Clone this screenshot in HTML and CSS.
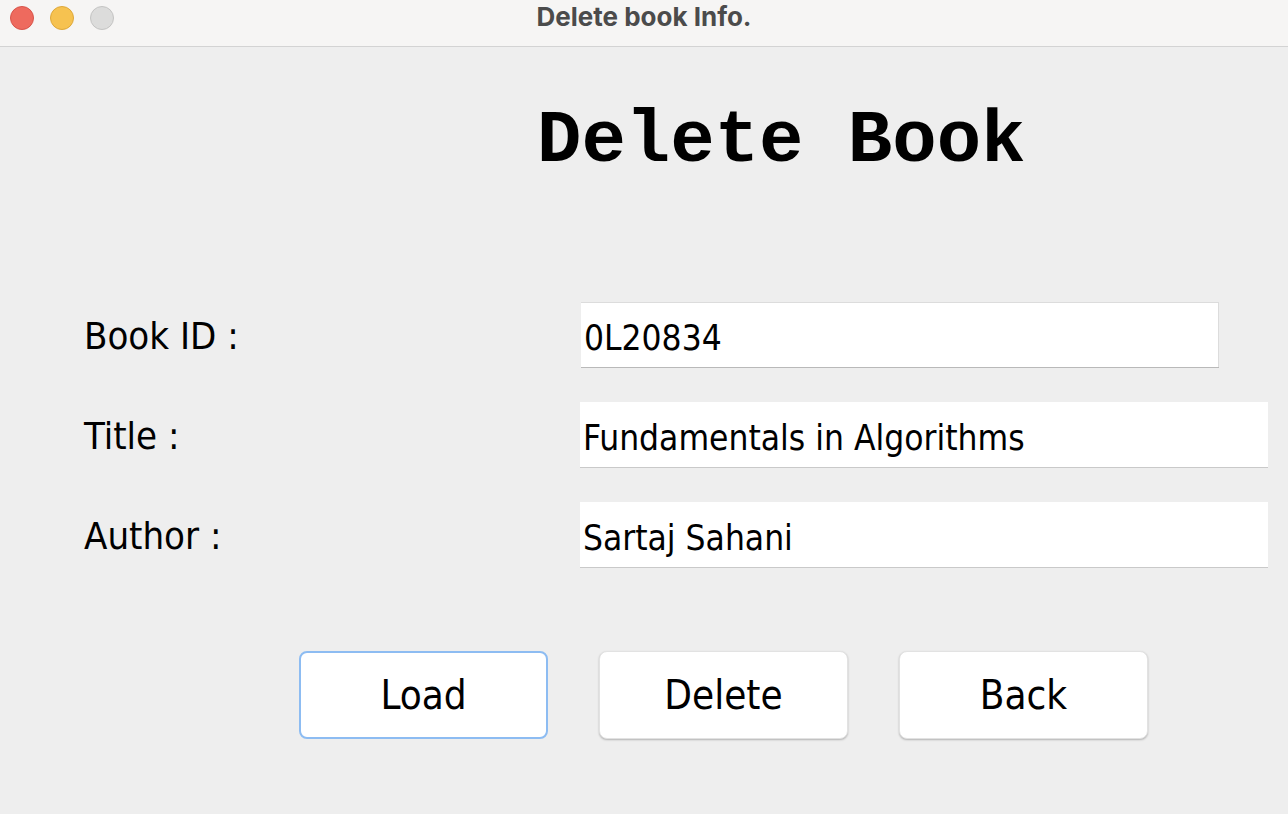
FILE: index.html
```html
<!DOCTYPE html>
<html>
<head>
<meta charset="utf-8">
<link rel="stylesheet" href="styles.css">
</head>
<body>
<div class="window">
  <header class="titlebar">
    <div class="lights">
      <span class="light red"></span>
      <span class="light yellow"></span>
      <span class="light gray"></span>
    </div>
    <div class="wintitle">Delete book Info.</div>
  </header>
  <main class="content">
    <h1 class="heading">Delete Book</h1>
    <div class="form">
      <label class="label">Book ID :</label>
      <div class="field field-id">0L20834</div>
      <label class="label">Title :</label>
      <div class="field field-wide">Fundamentals in Algorithms</div>
      <label class="label">Author :</label>
      <div class="field field-wide">Sartaj Sahani</div>
    </div>
    <div class="buttons">
      <button class="btn btn-focus">Load</button>
      <button class="btn">Delete</button>
      <button class="btn">Back</button>
    </div>
  </main>
</div>
</body>
</html>
```

FILE: styles.css
```css
html, body {
  margin: 0;
  padding: 0;
}
body {
  width: 1288px;
  height: 814px;
  overflow: hidden;
  background: #eeeeee;
  font-family: "DejaVu Sans Condensed", "DejaVu Sans", sans-serif;
}
.window {
  width: 1288px;
  height: 814px;
  display: flex;
  flex-direction: column;
}
.titlebar {
  height: 46px;
  flex: 0 0 46px;
  background: #f6f5f4;
  border-bottom: 1px solid #d3d3d3;
  display: flex;
  align-items: center;
  position: relative;
}
.lights {
  display: flex;
  gap: 16px;
  padding-left: 10px;
  margin-top: -10px;
}
.light {
  width: 22px;
  height: 22px;
  border-radius: 50%;
  border: 1px solid transparent;
}
.red { background: #ee6a5e; border-color: #d8544a; }
.yellow { background: #f6c250; border-color: #dea83a; }
.gray { background: #dcdcdb; border-color: #c4c4c3; }
.wintitle {
  position: absolute;
  left: 0;
  right: 0;
  top: 2px;
  text-align: center;
  font-family: Inter, "Open Sans", sans-serif;
  font-weight: 700;
  font-size: 26px;
  color: #4b4b4b;
  line-height: 30px;
}
.content {
  flex: 1;
}
.heading {
  margin: 54px 0 0 537px;
  font-family: "Courier New", "Nimbus Mono PS", "Nimbus Mono L", "FreeMono", "Liberation Mono", monospace;
  font-weight: 700;
  font-size: 74px;
  line-height: 80px;
  color: #000;
}
.form {
  margin-top: 121px;
  display: grid;
  grid-template-columns: 496px 688px;
  grid-auto-rows: 65px;
  row-gap: 35px;
  padding-left: 84px;
}
.label {
  font-size: 38px;
  line-height: 65px;
  padding-top: 2px;
  box-sizing: border-box;
  color: #000;
}
.field {
  background: #fff;
  font-size: 35px;
  line-height: 65px;
  padding: 4px 0 0 3px;
  color: #000;
  box-shadow: 0 1px 0 #c9c9c9;
  height: 65px;
  box-sizing: border-box;
  overflow: hidden;
}
.field-id {
  width: 638px;
  margin-left: 1px;
  border-top: 1px solid #dcdcdc;
  border-right: 1px solid #dcdcdc;
  line-height: 63px;
  box-shadow: 0 1px 0 #b9b9b9;
}
.field-wide {
  width: 688px;
}
.buttons {
  margin-top: 84px;
  padding-left: 299px;
  display: flex;
  gap: 51px;
}
.btn {
  width: 249px;
  height: 88px;
  background: #fff;
  border: 1px solid #e2e2e2;
  border-radius: 8px;
  box-shadow: 0 1px 2px rgba(0,0,0,0.25);
  font-family: "DejaVu Sans Condensed", "DejaVu Sans", sans-serif;
  font-size: 40px;
  color: #000;
  padding: 0;
}
.btn-focus {
  border: 2px solid #8dbcf2;
  box-shadow: none;
}
```
